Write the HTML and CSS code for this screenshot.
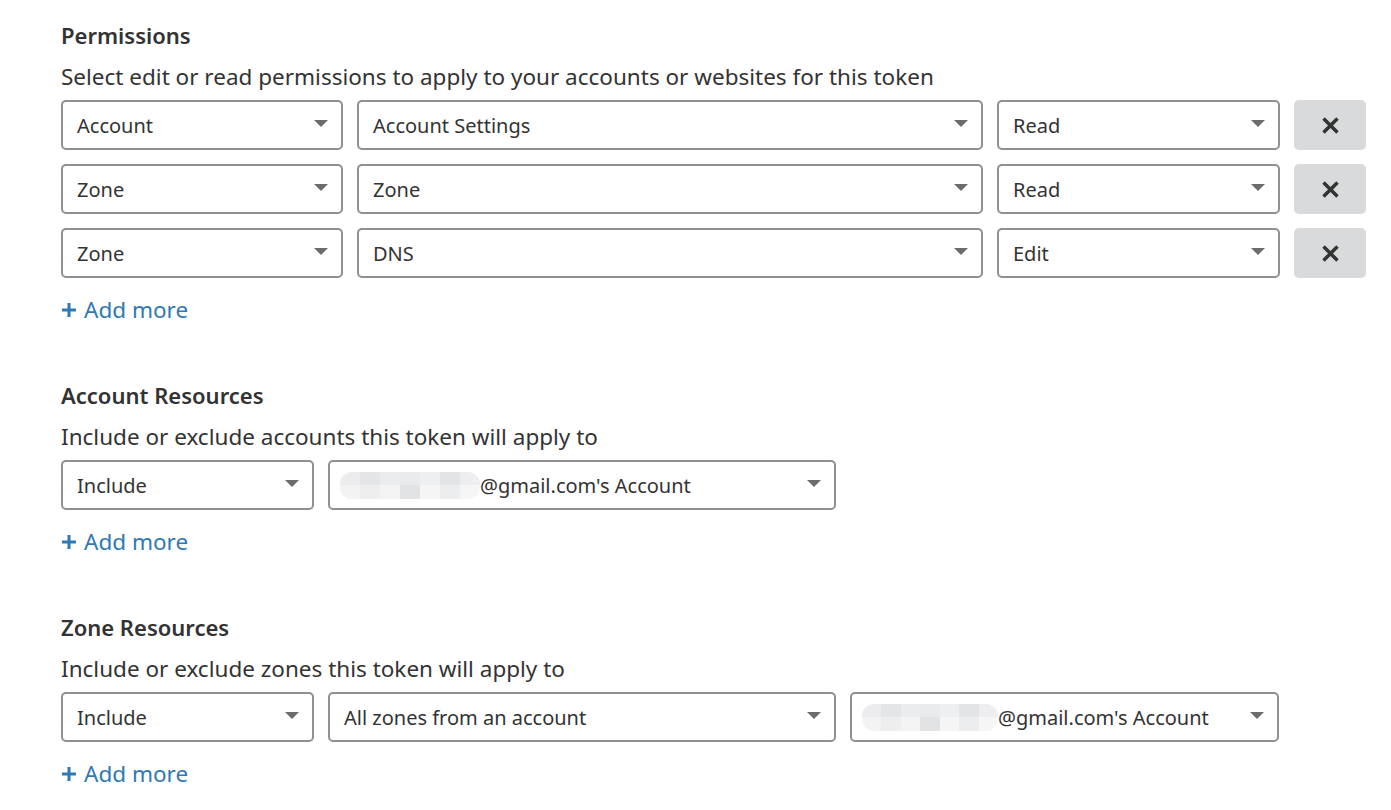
FILE: index.html
```html
<!DOCTYPE html>
<html>
<head>
<meta charset="utf-8">
<link rel="stylesheet" href="styles.css">
</head>
<body>
<main class="page">
  <section class="section">
    <h2 class="title">Permissions</h2>
    <p class="desc">Select edit or read permissions to apply to your accounts or websites for this token</p>
    <div class="rows">
      <div class="row">
        <div class="select w282"><span class="val">Account</span><span class="caret"></span></div>
        <div class="select w626"><span class="val">Account Settings</span><span class="caret"></span></div>
        <div class="select w283"><span class="val">Read</span><span class="caret"></span></div>
        <button class="remove" aria-label="Remove"><svg width="19" height="19" viewBox="0 0 19 19"><path d="M2.5 2.5 L16.5 16.5 M16.5 2.5 L2.5 16.5" stroke="#333" stroke-width="3.5"/></svg></button>
      </div>
      <div class="row">
        <div class="select w282"><span class="val">Zone</span><span class="caret"></span></div>
        <div class="select w626"><span class="val">Zone</span><span class="caret"></span></div>
        <div class="select w283"><span class="val">Read</span><span class="caret"></span></div>
        <button class="remove" aria-label="Remove"><svg width="19" height="19" viewBox="0 0 19 19"><path d="M2.5 2.5 L16.5 16.5 M16.5 2.5 L2.5 16.5" stroke="#333" stroke-width="3.5"/></svg></button>
      </div>
      <div class="row">
        <div class="select w282"><span class="val">Zone</span><span class="caret"></span></div>
        <div class="select w626"><span class="val">DNS</span><span class="caret"></span></div>
        <div class="select w283"><span class="val">Edit</span><span class="caret"></span></div>
        <button class="remove" aria-label="Remove"><svg width="19" height="19" viewBox="0 0 19 19"><path d="M2.5 2.5 L16.5 16.5 M16.5 2.5 L2.5 16.5" stroke="#333" stroke-width="3.5"/></svg></button>
      </div>
    </div>
    <a class="add" href="#"><svg class="plus" width="14" height="14" viewBox="0 0 14 14"><path d="M7 0 V14 M0 7 H14" stroke="#2f7ab4" stroke-width="3"/></svg>Add more</a>
  </section>

  <section class="section">
    <h2 class="title">Account Resources</h2>
    <p class="desc">Include or exclude accounts this token will apply to</p>
    <div class="rows">
      <div class="row">
        <div class="select w253"><span class="val">Include</span><span class="caret"></span></div>
        <div class="select w508"><span class="val"><span class="blur b1"><i></i><i></i><i></i><i></i><i></i><i></i><i></i></span>@gmail.com's Account</span><span class="caret"></span></div>
      </div>
    </div>
    <a class="add" href="#"><svg class="plus" width="14" height="14" viewBox="0 0 14 14"><path d="M7 0 V14 M0 7 H14" stroke="#2f7ab4" stroke-width="3"/></svg>Add more</a>
  </section>

  <section class="section">
    <h2 class="title">Zone Resources</h2>
    <p class="desc">Include or exclude zones this token will apply to</p>
    <div class="rows">
      <div class="row">
        <div class="select w253"><span class="val">Include</span><span class="caret"></span></div>
        <div class="select w508"><span class="val">All zones from an account</span><span class="caret"></span></div>
        <div class="select w429"><span class="val"><span class="blur b2"><i></i><i></i><i></i><i></i><i></i><i></i><i></i></span>@gmail.com's Account</span><span class="caret"></span></div>
      </div>
    </div>
    <a class="add" href="#"><svg class="plus" width="14" height="14" viewBox="0 0 14 14"><path d="M7 0 V14 M0 7 H14" stroke="#2f7ab4" stroke-width="3"/></svg>Add more</a>
  </section>
</main>
</body>
</html>
```

FILE: styles.css
```css
* { box-sizing: border-box; }
html, body { margin: 0; padding: 0; background: #fff; }
body {
  font-family: "Noto Sans", "Open Sans", sans-serif;
  color: #333;
}
.page {
  padding: 20px 0 0 61px;
}
.section {
  margin-bottom: 55px;
}
.title {
  margin: 0;
  font-size: 22px;
  font-weight: 600;
  line-height: 30px;
  color: #333;
}
.desc {
  margin: 12px 0 8px;
  font-size: 22.5px;
  line-height: 30px;
  color: #333;
}
.rows {
  display: flex;
  flex-direction: column;
  gap: 14px;
}
.row {
  display: flex;
  gap: 14px;
}
.select {
  height: 50px;
  border: 2px solid #8e9194;
  border-radius: 5px;
  display: flex;
  align-items: center;
  justify-content: space-between;
  padding: 0 13px 0 14px;
  font-size: 20px;
  color: #333;
}
.val {
  display: flex;
  align-items: center;
}
.w282 { width: 282px; }
.w626 { width: 626px; }
.w283 { width: 283px; }
.w253 { width: 253px; }
.w508 { width: 508px; }
.w429 { width: 429px; }
.caret {
  width: 0;
  height: 0;
  border-left: 7px solid transparent;
  border-right: 7px solid transparent;
  border-top: 7px solid #6a6c6e;
  margin-top: -4px;
}
.remove {
  width: 72px;
  height: 50px;
  border: 0;
  border-radius: 5px;
  background: #d9dadb;
  display: flex;
  align-items: center;
  justify-content: center;
  padding: 0;
}
.add {
  display: inline-flex;
  align-items: center;
  margin-top: 17px;
  font-size: 22.5px;
  line-height: 30px;
  color: #2f7ab4;
  text-decoration: none;
}
.plus {
  margin: 0 8px 0 1px;
}
.blur {
  display: inline-flex;
  height: 27px;
  border-radius: 12px;
  overflow: hidden;
  margin-left: -4px;
}
.blur i {
  display: block;
  height: 100%;
  width: 20px;
}
.b1 { width: 140px; }
.b2 { width: 136px; }
.blur i:nth-child(1) { background: linear-gradient(#ececee 50%, #f3f3f4 50%); }
.blur i:nth-child(2) { background: linear-gradient(#e4e5e7 50%, #eeeeef 50%); }
.blur i:nth-child(3) { background: linear-gradient(#ebecee 50%, #f4f4f5 50%); }
.blur i:nth-child(4) { background: linear-gradient(#eaebed 50%, #e2e3e5 50%); }
.blur i:nth-child(5) { background: linear-gradient(#eeeff0 50%, #f5f5f6 50%); }
.blur i:nth-child(6) { background: linear-gradient(#e3e4e6 50%, #ecedee 50%); }
.blur i:nth-child(7) { background: linear-gradient(#eeeef0 50%, #f6f6f7 50%); }
```
